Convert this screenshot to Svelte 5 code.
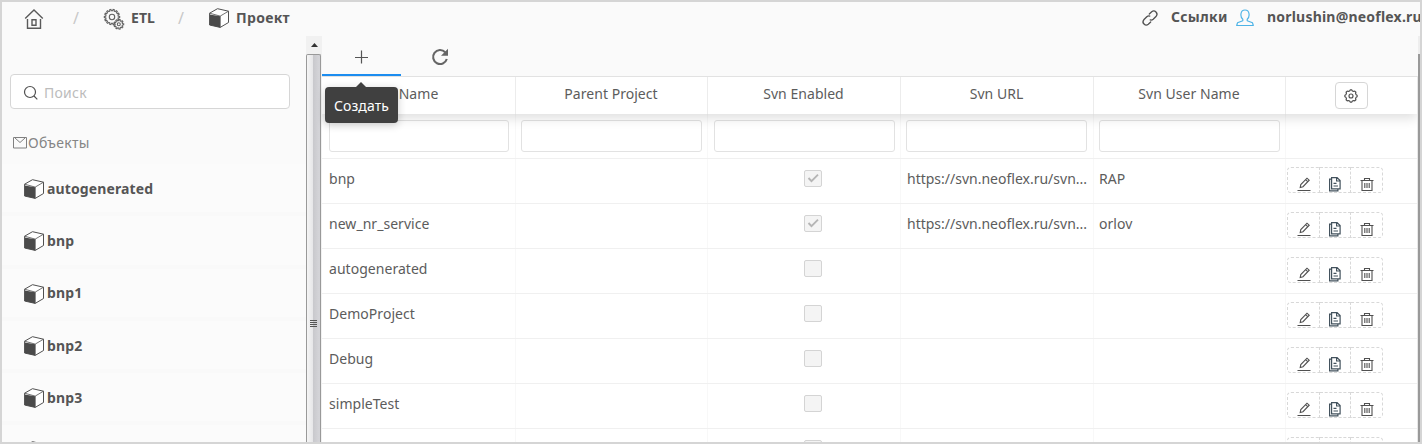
<script>
  const projects = ['autogenerated', 'bnp', 'bnp1', 'bnp2', 'bnp3', ''];
  const columns = ['Name', 'Parent Project', 'Svn Enabled', 'Svn URL', 'Svn User Name'];
  const rows = [
    { name: 'bnp', on: true, url: 'https://svn.neoflex.ru/svn...', user: 'RAP' },
    { name: 'new_nr_service', on: true, url: 'https://svn.neoflex.ru/svn...', user: 'orlov' },
    { name: 'autogenerated' },
    { name: 'DemoProject' },
    { name: 'Debug' },
    { name: 'simpleTest' },
    { name: '' }
  ];

  function gear(cx, cy, outer, inner, teeth) {
    const pts = [];
    const step = (Math.PI * 2) / teeth;
    for (let i = 0; i < teeth; i++) {
      for (const [f, r] of [[-0.3, inner], [-0.17, outer], [0.17, outer], [0.3, inner]]) {
        const a = (i + f) * step;
        pts.push(`${(cx + r * Math.cos(a)).toFixed(2)} ${(cy + r * Math.sin(a)).toFixed(2)}`);
      }
    }
    return `M${pts.join('L')}Z`;
  }
</script>

{#snippet cube()}
  <svg class="cube" width="20" height="20" viewBox="0 0 20 20" fill="none" stroke="#505050" stroke-width="1" stroke-linejoin="round">
    <path d="M.6 5.200 8.500.7l11 2.500v11.300l-8.300 4.900L.6 17z" fill="#fff" />
    <path d="M.6 6.600 11.200 8.300v11.100L.6 17z" fill="#4a4a4a" stroke="none" />
    <path d="M.6 5.200 11.200 8.100l8.300-4.900M11.200 8.100v11.300" stroke-width=".8" />
  </svg>
{/snippet}

<div class="frame">
  <header>
    <svg class="home" width="20" height="22" viewBox="0 0 20 22" fill="none" stroke="#5a5a5a" stroke-width="1.4">
      <path d="M1.2 10.6 10 2l8.800 8.600M3.500 11v9.300h13V11M8 11.800h4v5.400H8z" />
    </svg>
    <span class="slash s1">/</span>
    <svg class="gears" width="22" height="22" viewBox="0 0 22 22" fill="none" stroke="#626262" stroke-width="1.1">
      <path d={gear(9, 9, 7.700, 6.300, 14)} /><circle cx="9" cy="9" r="2.700" />
      <path d={gear(15.800, 16.300, 4.900, 3.700, 9)} fill="#fafafa" /><circle cx="15.800" cy="16.300" r="1.500" />
    </svg>
    <b class="etl">ETL</b>
    <span class="slash s2">/</span>
    {@render cube()}
    <b class="proj">Проект</b>
    <div class="account">
      <svg class="link" width="18" height="18" viewBox="0 0 18 18" fill="none" stroke="#505050" stroke-width="1.3" stroke-linecap="round">
        <path d="M8.300 5 10.700 2.700a3.200 3.200 0 0 1 4.500 4.500l-3 3a3.200 3.200 0 0 1-3 .7M9.700 13l-2.400 2.300a3.200 3.200 0 0 1-4.500-4.500l3-3a3.200 3.200 0 0 1 3-.7" />
      </svg>
      <b class="refs">Ссылки</b>
      <svg class="person" width="18" height="18" viewBox="0 0 18 18" fill="none" stroke="#4db3e6" stroke-width="1.2" stroke-linejoin="round">
        <path d="M6.800 10.300C4 8 4 1 9 1s5 7 2.200 9.300v1.500l5.300 2 .8 2.700H.7l.8-2.700 5.300-2z" />
      </svg>
      <b class="mail">norlushin@neoflex.ru</b>
    </div>
  </header>

  <div class="body">
    <aside>
      <div class="search">
        <svg width="16" height="16" viewBox="0 0 16 16" fill="none" stroke="#505050" stroke-width="1.2"><circle cx="7" cy="7" r="5.500" /><path d="m11 11 3.300 3.300" /></svg>
        <span>Поиск</span>
      </div>
      <div class="group">
        <svg width="14" height="12" viewBox="0 0 14 12" fill="none" stroke="#808080" stroke-width="1"><path d="M.5.5h13v10.500H.5zM2 1l5 4.500L12 1" /></svg>
        <span>Объекты</span>
      </div>
      <div class="tree">
        {#each projects as p}
          <div class="item">{@render cube()}<b>{p}</b></div>
        {/each}
      </div>
    </aside>

    <div class="scroll">
      <div class="arrow"><svg width="7" height="4" viewBox="0 0 7 4"><path d="M0 4 3.500 0 7 4z" fill="#333" /></svg></div>
      <div class="thumb"><div class="grip"><i></i><i></i><i></i><i></i></div></div>
    </div>

    <main>
      <div class="tabs">
        <div class="tab active">
          <svg width="14" height="14" viewBox="0 0 14 14" stroke="#555" stroke-width="1.200"><path d="M7.500 .5v13M1 7.500h13" /></svg>
          <div class="tip">Создать</div>
        </div>
        <div class="tab">
          <svg width="18" height="18" viewBox="0 0 18 18" fill="none"><path d="M14.200 4.200A7 7 0 1 0 15.800 11" stroke="#666" stroke-width="2.100" /><path d="M17 .8v7h-7z" fill="#666" /></svg>
        </div>
      </div>
      <div class="table">
        <div class="row head">
          {#each columns as c}<div class="cell">{c}</div>{/each}
          <div class="cell">
            <div class="gearbtn">
              <svg width="14" height="14" viewBox="0 0 14 14" fill="none" stroke="#505050" stroke-width="1.150" stroke-linejoin="round">
                <path d={gear(7, 7, 6.200, 5.300, 8)} /><circle cx="7" cy="7" r="2" />
              </svg>
            </div>
          </div>
        </div>
        <div class="row filters">
          {#each columns as c}<div class="cell"><div class="input"></div></div>{/each}
          <div class="cell"></div>
        </div>
        {#each rows as r}
          <div class="row">
            <div class="cell">{r.name}</div>
            <div class="cell"></div>
            <div class="cell mid">
              <div class="check">
                {#if r.on}<svg width="16" height="15" viewBox="0 0 16 15" fill="none" stroke="#b5b5b5" stroke-width="1.900"><path d="m3.500 7 3 3.200 6.500-6.500" /></svg>{/if}
              </div>
            </div>
            <div class="cell near">{r.url ?? ''}</div>
            <div class="cell user">{r.user ?? ''}</div>
            <div class="cell acts">
              <div class="act">
                <svg width="14" height="16" viewBox="0 0 14 16" fill="none" stroke="#505050" stroke-width="1.100"><path d="M.5 14.500h13M3.200 11.500l.6-3L10 2.200l2.200 2L6 10.700zM8.500 3.700l2.200 2" /></svg>
              </div>
              <div class="act">
                <svg width="14" height="16" viewBox="0 0 14 16" fill="none" stroke="#43525d" stroke-width="1.200"><path d="M3.600 1.600h5.500l3 3v8.300H3.600zM8.600 1.600V5h3.500M5.500 7.300h3M5.500 10h4.500M3.600 3.200H1.600v11.700h8.300v-2" /></svg>
              </div>
              <div class="act">
                <svg width="14" height="16" viewBox="0 0 14 16" fill="none" stroke="#505050" stroke-width="1.100"><path d="M.5 4.500h13M2 4.500v10h10v-10M4.500 4V2.500h5V4M4.800 7v5M7 7v5M9.200 7v5" /></svg>
              </div>
            </div>
          </div>
        {/each}
      </div>
    </main>
    <div class="edge"></div>
  </div>
</div>

<style>
  :global(body) { margin: 0; }
  .frame {
    box-sizing: border-box; width: 1422px; height: 444px; border: 2px solid #d5d5d5;
    background: #fafafa; color: #5c5c5c; overflow: hidden;
    font: 14px/20px "Noto Sans", "Open Sans", sans-serif;
  }
  svg { display: block; flex: none; }
  b { font-weight: 700; color: #555; white-space: nowrap; letter-spacing: 0.07px; }
  header { height: 34px; display: flex; align-items: center; padding-left: 22px; box-sizing: border-box; }
  header b { margin-top: -2px; }
  header .slash { margin-top: -2px; }
  .slash { color: #c8c8c8; width: 8px; font-size: 16px; }
  .s1 { margin-left: 29px; }
  .gears { margin-left: 22px; margin-top: -1px; }
  .etl { margin-left: 6px; width: 28px; }
  .s2 { margin-left: 19px; }
  header .cube { margin: -3px 0 0 23px; }
  .proj { margin-left: 7px; letter-spacing: 0.3px; }
  .account { margin-left: auto; width: 280px; display: flex; align-items: center; }
  .account b { margin-top: -4px; }
  .link { margin: -2px 0 0 1px; }
  .refs { margin-left: 12px; width: 56px; letter-spacing: 0.25px; }
  .person { margin: -2px 0 0 9px; }
  .mail { margin-left: 13px; letter-spacing: 0.21px; }
  .body { display: flex; height: 406px; }
  aside { width: 304px; flex: none; overflow: hidden; }
  .search {
    box-sizing: border-box; margin: 38px 0 0 8px; width: 280px; height: 35px; border: 1px solid #d6d6d6;
    border-radius: 4px; background: #fff; display: flex; align-items: center; gap: 5px;
    padding: 2px 0 0 12px; color: #bcbcbc; letter-spacing: 0.25px;
  }
  .group { display: flex; align-items: center; margin: 24px 0 0 11px; gap: 1px; height: 20px; color: #858585; letter-spacing: 0.25px; }
  .tree { margin-top: 11px; }
  .item { height: 52.3px; display: flex; align-items: center; padding-left: 22px; gap: 3px; background: linear-gradient(#fbfbfb 93%, #f9f9f9 93%); }
  .item .cube { margin-top: -2px; }
  .item b { margin-top: -3px; letter-spacing: 0.12px; }
  .scroll { width: 16px; flex: none; background: #f1f1f1; display: flex; flex-direction: column; }
  .arrow { height: 18px; display: flex; align-items: center; justify-content: center; }
  .thumb {
    box-sizing: border-box; width: 15px; flex: 1; border: solid #999; border-width: 1px 1px 0;
    border-radius: 2px 2px 0 0; background: linear-gradient(90deg, #f5f5f5, #e6e6e8 45%, #c9c9cd 50%, #d3d3d7 90%);
  }
  .grip { display: flex; flex-direction: column; gap: 1px; margin: 265px 0 0 3px; width: 7px; }
  .grip i { height: 1px; background: #555; }
  main { width: 1096px; flex: none; }
  .tabs { height: 40px; display: flex; }
  .tab { width: 79px; height: 40px; display: flex; align-items: center; justify-content: center; position: relative; padding-top: 2px; box-sizing: border-box; }
  .tab svg { margin-left: -1px; }
  .active { border-bottom: 2px solid #1c8df0; padding-top: 4px; }
  .tip {
    position: absolute; left: 3px; top: 51px; z-index: 3; width: 73px; height: 36px; border-radius: 4px;
    background: #404040; color: #fff; text-align: center; line-height: 38px; box-shadow: 0 2px 8px #0003; letter-spacing: 0.1px;
  }
  .tip::before { content: ""; position: absolute; left: 31px; top: -5px; border: 5px solid transparent; border-top: 0; border-bottom-color: #404040; }
  .table { background: #fff; border-right: 1px solid #e8e8e8; border-top: 1px solid #e2e2e2; }
  .row { display: grid; grid-template-columns: 194px 192px 193px 193px 192px 1fr; height: 45px; box-sizing: border-box; border-bottom: 1px solid #f0f0f0; letter-spacing: 0.04px; }
  .cell { box-sizing: border-box; border-right: 1px solid #f8f8f8; padding: 10px 0 0 7px; white-space: nowrap; }
  .cell:last-child { border-right: 0; }
  .near { padding-left: 6px; letter-spacing: 0; }
  .user { padding-left: 5px; }
  .head { height: 37px; border: 0; box-shadow: 0 4px 12px #0002; clip-path: inset(0 0 -20px 0); position: relative; background: #fff; }
  .head .cell { padding: 7px 1px 0 0; text-align: center; border-color: #ececec; }
  .head .cell:first-child { padding-left: 1px; }
  .gearbtn { box-sizing: border-box; width: 33px; height: 27px; margin: -2px auto 0; border: 1px solid #d6d6d6; border-radius: 4px; display: flex; align-items: center; justify-content: center; padding-top: 1px; }
  .filters .cell { padding: 6px 5px 0; }
  .filters .cell:first-child { padding: 6px 6px 0 7px; }
  .filters .cell:nth-child(3) { padding-left: 6px; }
  .filters .cell:nth-child(4) { padding-right: 6px; }
  .input { box-sizing: border-box; height: 32px; border: 1px solid #e2e2e2; border-radius: 3px; }
  .mid { padding-left: 96px; }
  .check { box-sizing: border-box; width: 18px; height: 17px; border: 1px solid #d4d4d4; border-radius: 2px; background: #f4f4f4; margin-top: 1px; }
  .acts { display: flex; padding: 8px 0 0 1px; }
  .act { box-sizing: border-box; width: 31px; height: 26px; border: 1px dashed #d8d8d8; border-left: 0; display: flex; justify-content: center; padding-top: 8px; }
  .act:first-child { width: 33px; border-left: 1px dashed #d8d8d8; border-radius: 4px 0 0 4px; }
  .act:last-child { width: 32px; border-radius: 0 4px 4px 0; }
  .edge { flex: 1; background: linear-gradient(#eee 18px, #999 18px); }
</style>
